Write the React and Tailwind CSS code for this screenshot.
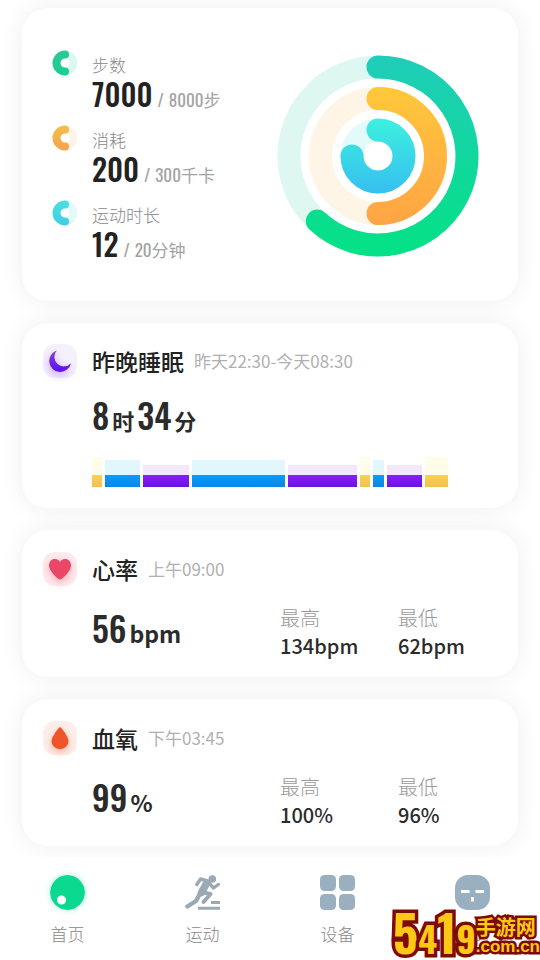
import React, { useState } from "react";
import clsx from "clsx";

const NUM_FONT = "font-['Oswald','Noto_Sans_CJK_SC',sans-serif]";

const goals = [
  { id: "steps", label: "步数", value: "7000", goal: "8000步", from: "#1fcdb9", to: "#04e284", track: "#def8f1" },
  { id: "energy", label: "消耗", value: "200", goal: "300千卡", from: "#ffc83a", to: "#ffa445", track: "#fff5e6" },
  { id: "time", label: "运动时长", value: "12", goal: "20分钟", from: "#3df0df", to: "#36bff0", track: "#e2fafa" },
];

// Small legend rings use slightly different shades than the big chart
const miniColors = {
  steps: ["#2cc796", "#17d193"],
  energy: ["#f7bf4a", "#f6a24c"],
  time: ["#4be0dc", "#3fcde8"],
};

// Width is the share of the night, the tint height depends on the stage
const sleepStages = [
  { type: "awake", width: 10 },
  { type: "light", width: 35 },
  { type: "deep", width: 46 },
  { type: "light", width: 93 },
  { type: "deep", width: 69 },
  { type: "awake", width: 10 },
  { type: "light", width: 11 },
  { type: "deep", width: 35 },
  { type: "awake", width: 23 },
];

const stageStyles = {
  awake: { tint: "h-[18px] bg-[#fffdea]", bar: "bg-linear-to-b from-[#ffcf52] to-[#f3bf55]" },
  light: { tint: "h-[15px] bg-[#e2f6fe]", bar: "bg-linear-to-b from-[#0a9cfa] to-[#0a86e6]" },
  deep: { tint: "h-[10px] bg-[#f2e7fb]", bar: "bg-linear-to-b from-[#8a1cf8] to-[#6a12e0]" },
};

function Card({ children, className }) {
  return (
    <section
      className={clsx(
        "rounded-[26px] bg-white shadow-[0_0_24px_rgba(0,0,0,0.07)]",
        className
      )}
    >
      {children}
    </section>
  );
}

function MiniRing({ id, track }) {
  const [from, to] = miniColors[id];
  return (
    <svg viewBox="0 0 26 26" className="h-[26px] w-[26px]" aria-hidden="true">
      <defs>
        <linearGradient id={`mini-${id}`} gradientUnits="userSpaceOnUse" x1="0" y1="0" x2="0" y2="26">
          <stop offset="0" stopColor={from} />
          <stop offset="1" stopColor={to} />
        </linearGradient>
      </defs>
      <path d="M14 4.5A8.500 8.500 0 0 1 14 21.500" fill="none" stroke={track} strokeWidth="8" />
      <path
        d="M14 4.500A8.500 8.500 0 0 0 14 21.500"
        fill="none"
        stroke={`url(#mini-${id})`}
        strokeWidth="8"
        strokeLinecap="round"
      />
    </svg>
  );
}

function ActivityRings() {
  return (
    <svg viewBox="0 0 202 202" className="h-auto w-[202px]" role="img" aria-label="今日活动">
      <defs>
        {goals.map((g) => (
          <linearGradient
            key={g.id}
            id={`ring-${g.id}`}
            gradientUnits="userSpaceOnUse"
            x1="0"
            x2="0"
            y1={g.id === "steps" ? 0 : g.id === "energy" ? 32 : 64}
            y2={g.id === "steps" ? 202 : g.id === "energy" ? 170 : 138}
          >
            <stop offset="0" stopColor={g.from} />
            <stop offset="1" stopColor={g.to} />
          </linearGradient>
        ))}
      </defs>
      <g fill="none" strokeWidth="23" strokeLinecap="round">
        <circle cx="101" cy="101" r="89" stroke="#def8f1" />
        <circle cx="101" cy="101" r="57.5" stroke="#fff5e6" />
        <circle cx="101" cy="101" r="26" stroke="#e2fafa" />
        <path d="M101 12A89 89 0 1 1 40.3 166.1" stroke="url(#ring-steps)" />
        <path d="M101 43.5A57.500 57.500 0 0 1 101 158.5" stroke="url(#ring-energy)" />
        <path d="M101 75A26 26 0 1 1 75 101" stroke="url(#ring-time)" />
      </g>
    </svg>
  );
}

function MoonIcon() {
  return (
    <svg viewBox="0 0 24 24" className="h-6 w-6 drop-shadow-[0_3px_4px_rgba(124,50,255,0.45)]" aria-hidden="true">
      <defs>
        <linearGradient id="moon" x1="0" y1="0" x2="0" y2="1">
          <stop offset="0" stopColor="#8446cf" />
          <stop offset="1" stopColor="#5d0cf5" />
        </linearGradient>
      </defs>
      <path d="M8.8 1.5A11 11 0 1 0 23 14.2A8.600 8.600 0 0 1 8.8 1.5Z" fill="url(#moon)" />
    </svg>
  );
}

function HeartIcon() {
  return (
    <svg viewBox="0 0 24 24" className="h-6 w-6 drop-shadow-[0_3px_4px_rgba(255,60,90,0.4)]" aria-hidden="true">
      <path
        d="M12 22.5C10.5 22.5 1 14.5 1 8.5C1 4.5 3.7 2 6.800 2C9.2 2 11 3.2 12 5C13 3.2 14.8 2 17.2 2C20.3 2 23 4.5 23 8.5C23 14.5 13.5 22.5 12 22.5Z"
        fill="#ea4766"
      />
    </svg>
  );
}

function DropIcon() {
  return (
    <svg viewBox="0 0 24 24" className="h-6 w-6 drop-shadow-[0_3px_4px_rgba(255,80,30,0.4)]" aria-hidden="true">
      <path
        d="M12 1C12.8 1 20.5 10.5 20.5 15.2A8.500 8 0 0 1 3.5 15.2C3.5 10.5 11.2 1 12 1Z"
        fill="#f0542a"
      />
    </svg>
  );
}

function CardTitle({ icon, badge, title, time }) {
  return (
    <header className="flex h-[34px] items-center">
      <span
        className={clsx(
          "mr-[15px] ml-[21px] flex h-[34px] w-[34px] items-center justify-center rounded-xl",
          badge
        )}
      >
        {icon}
      </span>
      <h2 className="text-[23px] font-medium text-[#222222]">{title}</h2>
      <span className="ml-[10px] text-[17px] text-[#b0b0b0]">{time}</span>
    </header>
  );
}

function VitalCard({ value, unit, high, low, ...title }) {
  return (
    <Card className="pt-[22px] pb-[17px]">
      <CardTitle {...title} />
      <div className="mt-[18px] ml-[70px] grid grid-cols-[188fr_118fr_120fr]">
        <p className="flex items-baseline gap-[3px] text-[#2b2b2b]">
          <span className={clsx("text-[34px] leading-[48px] font-medium", NUM_FONT)}>{value}</span>
          <span className="text-[23px] leading-none font-bold">{unit}</span>
        </p>
        <dl className="leading-7">
          <dt className="text-[20px] font-light text-[#999999]">最高</dt>
          <dd className="text-[20px] font-medium text-[#2b2b2b]">{high}</dd>
        </dl>
        <dl className="leading-7">
          <dt className="text-[20px] font-light text-[#999999]">最低</dt>
          <dd className="text-[20px] font-medium text-[#2b2b2b]">{low}</dd>
        </dl>
      </div>
    </Card>
  );
}

function HomeIcon() {
  return (
    <svg viewBox="0 0 35 35" className="h-[35px] w-[35px] rounded-full shadow-[0_0_6px_rgba(11,217,143,0.35)]" aria-hidden="true">
      <circle cx="17.5" cy="17.5" r="17.5" fill="#0bd98f" />
      <circle cx="11.5" cy="25" r="4.5" fill="#ffffff" />
    </svg>
  );
}

function RunIcon() {
  return (
    <svg
      viewBox="0 0 35 35"
      className="h-[35px] w-[35px]"
      fill="none"
      stroke="#9aa9b3"
      strokeLinecap="round"
      strokeLinejoin="round"
      aria-hidden="true"
    >
      <circle cx="27.3" cy="4" r="3.8" fill="#9aa9b3" stroke="none" />
      <path d="M11.8 9.5L15.5 4L22.5 6" strokeWidth="3.4" />
      <path d="M21.5 8.5L16.5 17.5" strokeWidth="7.5" />
      <path d="M24 8L28.5 13L33.3 9.5" strokeWidth="3.4" />
      <path d="M18.5 17.5L25.5 19L18.5 27" strokeWidth="4" />
      <path d="M15 18.5L11 26L2.4 31.5" strokeWidth="4.4" />
      <path d="M26 27.5H35M13 33.3H35" strokeWidth="3" strokeLinecap="butt" />
    </svg>
  );
}

function DeviceIcon() {
  return (
    <svg viewBox="0 0 35 35" className="h-[35px] w-[35px]" fill="#9aafbf" aria-hidden="true">
      <rect width="16" height="16" rx="4.5" />
      <rect x="19" width="16" height="16" rx="4.5" />
      <rect y="19" width="16" height="16" rx="4.5" />
      <rect x="19" y="19" width="16" height="16" rx="4.5" />
    </svg>
  );
}

function MineIcon() {
  return (
    <svg viewBox="0 0 35 35" className="h-[35px] w-[35px]" aria-hidden="true">
      <rect width="35" height="35" rx="13" fill="#9aafbf" />
      <path d="M6 16.5H14.5M20.5 16.5H29" stroke="#ffffff" strokeWidth="2.8" />
      <path d="M17.5 22V26.5" stroke="#ffffff" strokeWidth="2.8" />
    </svg>
  );
}

const tabs = [
  { id: "home", label: "首页", Icon: HomeIcon },
  { id: "sport", label: "运动", Icon: RunIcon },
  { id: "device", label: "设备", Icon: DeviceIcon },
  { id: "mine", label: "我的", Icon: MineIcon },
];

// Site stamp in the bottom corner
function SiteStamp() {
  return (
    <div className="pointer-events-none absolute right-0 bottom-1 flex items-end font-bold text-[#ffc814] [-webkit-text-stroke:7px_#7d0a05] [paint-order:stroke_fill]">
      <span className="flex items-baseline font-['Oswald',sans-serif] leading-none">
        <span className="text-[50px]">5</span>
        <span className="text-[36px]">4</span>
        <span className="text-[50px]">1</span>
        <span className="text-[36px]">9</span>
      </span>
      <span className="flex flex-col [-webkit-text-stroke-width:5px]">
        <span className="text-[20px] leading-[22px]">手游网</span>
        <span className="font-['Liberation_Sans',sans-serif] text-[17px] leading-[18px]">.com.cn</span>
      </span>
    </div>
  );
}

export default function App() {
  const [activeTab, setActiveTab] = useState("home");

  return (
    <div className="relative flex min-h-screen flex-col overflow-hidden bg-white font-['Noto_Sans_CJK_SC',sans-serif]">
      <main className="flex flex-1 flex-col gap-[22px] px-[22px] pt-2 pb-[11px]">
        {/* Activity */}
        <Card className="flex items-center justify-between pt-[42px] pr-[39px] pb-10 pl-[29px]">
          <ul className="flex flex-col gap-[14px]">
            {goals.map((g) => (
              <li key={g.id} className="flex gap-[15px]">
                <MiniRing {...g} />
                <div className="pt-[3px]">
                  <p className="text-[17px] leading-6 font-light text-[#888888]">{g.label}</p>
                  <p className={clsx("flex items-baseline gap-[5px] text-[#a3a3a3]", NUM_FONT)}>
                    <span className="text-[30px] leading-[34px] font-medium text-[#222222]">{g.value}</span>
                    <span className="text-[17px] leading-none">/</span>
                    <span className="text-[17px] leading-none">{g.goal}</span>
                  </p>
                </div>
              </li>
            ))}
          </ul>
          <ActivityRings />
        </Card>

        {/* Sleep */}
        <Card className="pt-[21px] pb-[21px]">
          <CardTitle
            icon={<MoonIcon />}
            badge="bg-[#f6f0fd]"
            title="昨晚睡眠"
            time="昨天22:30-今天08:30"
          />
          <p className="mt-[17px] ml-[70px] flex items-baseline gap-[3px] text-[#2b2b2b]">
            <span className={clsx("text-[34px] leading-10 font-medium", NUM_FONT)}>8</span>
            <span className="text-[22px] leading-none font-bold">时</span>
            <span className={clsx("text-[34px] leading-10 font-medium", NUM_FONT)}>34</span>
            <span className="text-[22px] leading-none font-bold">分</span>
          </p>
          <div className="mt-[22px] mr-[70px] ml-[70px] flex h-[30px] items-end gap-[3px]">
            {sleepStages.map((s, i) => (
              <div key={i} className="basis-0" style={{ flexGrow: s.width }}>
                <div className={stageStyles[s.type].tint} />
                <div className={clsx("h-3", stageStyles[s.type].bar)} />
              </div>
            ))}
          </div>
        </Card>

        <VitalCard
          icon={<HeartIcon />}
          badge="bg-[#fdecef]"
          title="心率"
          time="上午09:00"
          value="56"
          unit="bpm"
          high="134bpm"
          low="62bpm"
        />
        <VitalCard
          icon={<DropIcon />}
          badge="bg-[#fbefeb]"
          title="血氧"
          time="下午03:45"
          value="99"
          unit="%"
          high="100%"
          low="96%"
        />
      </main>

      <nav className="relative grid h-[103px] grid-cols-4 items-start bg-white pt-[18px]">
        {tabs.map(({ id, label, Icon }) => (
          <button
            key={id}
            type="button"
            aria-current={activeTab === id ? "page" : undefined}
            onClick={() => setActiveTab(id)}
            className="flex cursor-pointer flex-col items-center gap-3"
          >
            <Icon />
            <span className="text-[17px] leading-6 font-light text-[#888888]">{label}</span>
          </button>
        ))}
      </nav>

      <SiteStamp />
    </div>
  );
}
